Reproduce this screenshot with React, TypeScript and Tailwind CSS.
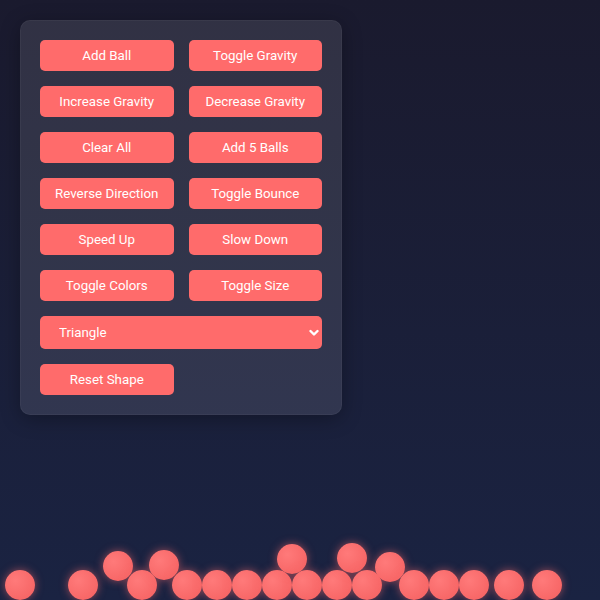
import React, { useState } from 'react';

const buttons = [
  'Add Ball',
  'Toggle Gravity',
  'Increase Gravity',
  'Decrease Gravity',
  'Clear All',
  'Add 5 Balls',
  'Reverse Direction',
  'Toggle Bounce',
  'Speed Up',
  'Slow Down',
  'Toggle Colors',
  'Toggle Size',
];

// ball centres on the canvas
const balls: [number, number][] = [
  [20, 585],
  [83, 585],
  [118, 566],
  [142, 585],
  [164, 565],
  [187, 585],
  [217, 585],
  [247, 585],
  [277, 585],
  [292, 559],
  [307, 585],
  [337, 585],
  [352, 558],
  [367, 585],
  [390, 567],
  [414, 585],
  [444, 585],
  [474, 585],
  [509, 585],
  [547, 585],
];

export default function App() {
  const [shape, setShape] = useState('triangle');

  return (
    <div className="relative h-[600px] w-[600px] overflow-hidden bg-gradient-to-b from-[#1a1a2e] to-[#1a2342] font-['Roboto',sans-serif]">
      {balls.map(([x, y], i) => (
        <div
          key={i}
          className="absolute h-[30px] w-[30px] rounded-full bg-[radial-gradient(circle_at_35%_35%,#ff7a7a,#f45f5f)] shadow-[0_0_8px_rgba(255,107,107,0.55)]"
          style={{ left: x - 15, top: y - 15 }}
        />
      ))}

      <div className="absolute left-5 top-5 w-[322px] rounded-[10px] bg-white/10 p-5 shadow-[0_4px_20px_rgba(0,0,0,0.3),inset_0_0_0_1px_rgba(255,255,255,0.04)]">
        <div className="grid grid-cols-2 gap-x-[15px] gap-y-[15px]">
          {buttons.map((b) => (
            <button
              key={b}
              className="h-[31px] rounded-[5px] bg-[#ff6b6b] text-[13.33px] text-white"
            >
              {b}
            </button>
          ))}
        </div>

        <div className="relative mt-[15px]">
          <select
            value={shape}
            onChange={(e) => setShape(e.target.value)}
            className="h-[33px] w-full appearance-none rounded-[5px] bg-[#ff6b6b] pl-[19px] text-[13.33px] text-white outline-none"
          >
            <option value="circle">Circle</option>
            <option value="square">Square</option>
            <option value="triangle">Triangle</option>
          </select>
          <svg
            className="pointer-events-none absolute right-[3px] top-[12px] h-[10px] w-[10px]"
            viewBox="0 0 10 10"
            fill="none"
            stroke="white"
            strokeWidth="2.4"
            strokeLinecap="round"
            strokeLinejoin="round"
          >
            <path d="M1.5 3 5 6.5 8.5 3" />
          </svg>
        </div>

        <div className="mt-[15px] grid grid-cols-2 gap-x-[15px]">
          <button className="h-[31px] rounded-[5px] bg-[#ff6b6b] text-[13.33px] text-white">
            Reset Shape
          </button>
        </div>
      </div>
    </div>
  );
}
